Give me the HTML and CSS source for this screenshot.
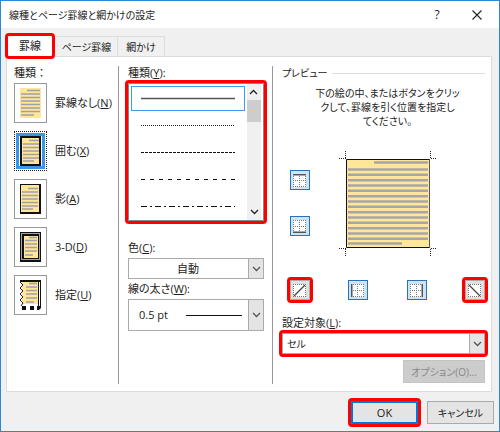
FILE: index.html
```
<!DOCTYPE html>
<html lang="ja">
<head>
  <meta charset="UTF-8">
  <meta name="viewport" content="width=device-width, initial-scale=1">
  <title>線種とページ罫線と網かけの設定</title>
  <link rel="stylesheet" href="styles.css">
</head>
<body>
  <!-- shared shapes -->
  <svg class="defs" width="0" height="0" aria-hidden="true">
    <symbol id="chevron" viewBox="0 0 9 6">
      <path d="M1 1l3.5 3.5L8 1" fill="none" stroke="currentColor" stroke-width="1.3"/>
    </symbol>
    <symbol id="page-lines" viewBox="0 0 16 23">
      <path d="M6 1.5h10M0 5h16M0 8.5h16M0 12h16M0 15.5h16M0 19h16M0 22h11" stroke="#a0a0a8" stroke-width="1.5"/>
    </symbol>
    <symbol id="cell-grid" viewBox="0 0 13 13">
      <path fill="#fff" d="M0 0h13v13H0z"/>
      <path d="M.5 0v13M6.5 0v13M12.5 0v13M0 .5h13M0 6.5h13M0 12.5h13" stroke="#777" stroke-dasharray="1 1"/>
    </symbol>
    <symbol id="cell-box" viewBox="0 0 13 13">
      <path fill="#fff" d="M0 0h13v13H0z"/>
      <path d="M.5 0v13M12.5 0v13M0 .5h13M0 12.5h13" stroke="#777" stroke-dasharray="1 1"/>
    </symbol>
  </svg>

  <div class="dialog">
    <header class="title-bar">
      <h1>線種とページ罫線と網かけの設定</h1>
      <button class="title-btn" aria-label="ヘルプ">?</button>
      <button class="title-btn" aria-label="閉じる">
        <svg width="10" height="10"><path d="M.5 .5l9 9M9.5 .5l-9 9" stroke="#222" stroke-width="1.1"/></svg>
      </button>
    </header>

    <nav class="tabs">
      <button class="tab active marked">罫線</button>
      <button class="tab wide">ページ罫線</button>
      <button class="tab">網かけ</button>
    </nav>

    <main class="panel">
      <section class="kinds">
        <h2 class="label">種類：</h2>
        <button class="kind">
          <span class="kind-icon">
            <svg width="23" height="32">
              <path fill="#ffe699" d="M1 1h21v30H1z"/>
              <path d="M8 3.5h13M2 7h19M2 10.5h19M2 14h19M2 17.5h19M2 21h19M2 24.5h19M2 28h13" stroke="#a0a0a8" stroke-width="1.5"/>
            </svg>
          </span>
          <span>罫線なし(<u>N</u>)</span>
        </button>
        <button class="kind selected">
          <span class="kind-icon">
            <svg width="23" height="32">
              <path fill="#ffe699" stroke="#111" stroke-width="2" d="M2 2h19v28H2z"/>
              <use href="#page-lines" x="4" y="4" width="16" height="23"/>
            </svg>
          </span>
          <span>囲む(<u>X</u>)</span>
        </button>
        <button class="kind">
          <span class="kind-icon">
            <svg width="23" height="32">
              <path fill="#111" d="M1 1h21v30H1z"/>
              <path fill="#ffe699" d="M2 2h18v27H2z"/>
              <use href="#page-lines" x="3" y="4" width="16" height="23"/>
            </svg>
          </span>
          <span>影(<u>A</u>)</span>
        </button>
        <button class="kind">
          <span class="kind-icon">
            <svg width="23" height="32">
              <path fill="#111" d="M1 1h21v30H1z"/>
              <path fill="#a6a6a6" d="M2 2h19v27H2z"/>
              <path fill="#111" d="M3 3h17v25H3z"/>
              <path fill="#ffe699" d="M5 5h14v22H5z"/>
              <path d="M10 6.5h8M6 9.5h12M6 13h12M6 16.5h12M6 20h12M6 24h8" stroke="#a0a0a8" stroke-width="1.5"/>
            </svg>
          </span>
          <span>3-D(<u>D</u>)</span>
        </button>
        <button class="kind">
          <span class="kind-icon">
            <svg width="23" height="32">
              <path fill="#ffe699" d="M3 3h16v22H3z"/>
              <path d="M1 2h21" stroke="#111" stroke-width="2"/>
              <path d="M19.5 3v24M21.5 3v25" stroke="#111"/>
              <path d="M1 3l3 3-3 3 3 3-3 3 3 3-3 3 3 3-2 3" fill="none" stroke="#222"/>
              <path d="M10 4.5h8M7 8h11M7 11.5h11M7 15h11M7 19h11M7 23h8" stroke="#a0a0a8" stroke-width="1.5"/>
              <path fill="#111" d="M3 27h4v4H3zM11 27h4v4h-4zM18 27h4v2l-2 2h-2z"/>
            </svg>
          </span>
          <span>指定(<u>U</u>)</span>
        </button>
      </section>

      <section class="line-style">
        <h2 class="label" id="style-label">種類(<u>Y</u>):</h2>
        <div class="list marked">
          <div class="list-rows" role="radiogroup" aria-labelledby="style-label">
            <label class="row"><input type="radio" name="style" aria-label="実線" checked><svg width="94" height="3"><path d="M0 1.5h94" stroke="#555" stroke-width="1.5"/></svg></label>
            <label class="row"><input type="radio" name="style" aria-label="点線"><svg width="94" height="3"><path d="M0 1.5h94" stroke="#222" stroke-dasharray="1 1"/></svg></label>
            <label class="row"><input type="radio" name="style" aria-label="破線"><svg width="94" height="3"><path d="M0 1.5h94" stroke="#111" stroke-dasharray="3 1"/></svg></label>
            <label class="row"><input type="radio" name="style" aria-label="破線 (広)"><svg width="94" height="3"><path d="M0 1.5h94" stroke="#111" stroke-dasharray="4 5"/></svg></label>
            <label class="row"><input type="radio" name="style" aria-label="一点鎖線"><svg width="94" height="3"><path d="M0 1.5h94" stroke="#111" stroke-dasharray="6 3 2 3"/></svg></label>
          </div>
          <div class="scrollbar">
            <button class="scroll-btn up" aria-label="上へ"><svg width="9" height="6"><use href="#chevron"/></svg></button>
            <div class="thumb"></div>
            <button class="scroll-btn" aria-label="下へ"><svg width="9" height="6"><use href="#chevron"/></svg></button>
          </div>
        </div>

        <label class="label color-label" for="color">色(<u>C</u>):</label>
        <div class="dropdown">
          <select id="color" class="centered"><option>自動</option></select>
          <span class="arrow"><svg width="9" height="6"><use href="#chevron"/></svg></span>
        </div>
        <label class="label" for="weight">線の太さ(<u>W</u>):</label>
        <div class="dropdown tall">
          <select id="weight"><option>0.5 pt</option></select>
          <svg class="weight-line" width="56" height="3"><path d="M0 1.5h56" stroke="#111"/></svg>
          <span class="arrow"><svg width="9" height="6"><use href="#chevron"/></svg></span>
        </div>
      </section>

      <section class="preview">
        <h2 class="label legend">プレビュー</h2>
        <div class="preview-body">
          <p>下の絵の中、またはボタンをクリッ<br>クして、罫線を引く位置を指定し<br>てください。</p>
          <div class="picture">
            <div class="side-btns">
              <button class="edge" aria-label="上罫線"><svg width="13" height="13"><use href="#cell-grid"/><path d="M0 .5h13" stroke="#555" stroke-width="2"/></svg></button>
              <button class="edge" aria-label="下罫線"><svg width="13" height="13"><use href="#cell-grid"/><path d="M0 12.5h13" stroke="#555" stroke-width="2"/></svg></button>
            </div>
            <svg width="98" height="105">
              <defs>
                <pattern id="text-lines" width="80" height="16" patternUnits="userSpaceOnUse" y="1">
                  <path d="M0 1.5h80M0 6.8h80M0 12.2h80" stroke="#a6a6a6" stroke-width="2.6"/>
                </pattern>
              </defs>
              <path fill="#ffe699" stroke="#111" d="M7.5 8.5h83v88h-83z"/>
              <path d="M90.5 9v88" stroke="#555"/>
              <path d="M35 11.5h54M9 92.5h54" stroke="#a6a6a6" stroke-width="2.6"/>
              <path fill="url(#text-lines)" d="M9 15h80v75H9z"/>
              <path d="M0 7.5h7M6.5 0v7M91.5 0v7M92 7.5h7M0 97.5h7M6.5 98v7M91.5 98v7M92 97.5h7" stroke="#222" stroke-dasharray="1 1"/>
            </svg>
          </div>
          <div class="bottom-btns">
            <button class="edge off marked" aria-label="斜め罫線 (右上がり)"><svg width="13" height="13"><use href="#cell-box"/><path d="M1 12L12 1" stroke="#444" stroke-width="1.2"/></svg></button>
            <button class="edge" aria-label="左罫線"><svg width="13" height="13"><use href="#cell-grid"/><path d="M.5 0v13" stroke="#555" stroke-width="2"/></svg></button>
            <button class="edge" aria-label="右罫線"><svg width="13" height="13"><use href="#cell-grid"/><path d="M12.5 0v13" stroke="#555" stroke-width="2"/></svg></button>
            <button class="edge off marked" aria-label="斜め罫線 (右下がり)"><svg width="13" height="13"><use href="#cell-box"/><path d="M1 1l11 11" stroke="#444" stroke-width="1.2"/></svg></button>
          </div>
        </div>
        <label class="label" for="target">設定対象(<u>L</u>):</label>
        <div class="dropdown marked">
          <select id="target"><option>セル</option></select>
          <span class="arrow"><svg width="9" height="6"><use href="#chevron"/></svg></span>
        </div>
        <button class="btn options" disabled>オプション(O)...</button>
      </section>
    </main>

    <footer class="actions">
      <button class="btn primary marked">OK</button>
      <button class="btn">キャンセル</button>
    </footer>
  </div>
</body>
</html>
```
FILE: styles.css
```
* {
  box-sizing: border-box;
  margin: 0;
  padding: 0;
}

body, button, select {
  font-family: "Open Sans", "Noto Sans CJK JP", sans-serif;
  font-size: 11px;
  line-height: 14px;
  font-feature-settings: "palt";
  color: #222;
}

button {
  border: none;
  background: none;
}

svg {
  display: block;
}

.defs {
  position: absolute;
}

.dialog {
  display: flex;
  flex-direction: column;
  min-height: 100vh;
  border: 1px solid #2b8ad8;
  background: #f0f0f0;
}

/* Red frames around the controls to use */
.marked {
  outline: 3px solid #f00;
  border-radius: 1px;
}

/* Title bar */
.title-bar {
  display: flex;
  align-items: center;
  height: 27px;
  padding: 0 8px 0 8px;
  background: #fff;
}

h1 {
  flex: 1;
  font-size: 10px;
  font-weight: normal;
}

.title-btn {
  display: flex;
  justify-content: center;
  align-items: center;
  width: 28px;
  height: 24px;
  margin-left: 12px;
  font-size: 12px;
}

/* Tabs */
.tabs {
  display: flex;
  align-items: flex-end;
  padding: 8px 7px 0;
}

.tab {
  width: 47px;
  height: 20px;
  border: 1px solid #dcdcdc;
  border-width: 1px 1px 0 0;
  font-size: 10px;
}

.tab.wide {
  width: 62px;
}

.tab.active {
  width: 44px;
  margin-right: 4px;
  border: none;
  background: #fff;
  font-size: 11px;
  z-index: 1;
}

/* Panel */
.panel {
  display: grid;
  grid-template-columns: 111px 154px 1fr;
  flex: 1;
  margin: 0 7px 0 5px;
  padding: 9px 6px 7px 0;
  border: 1px solid #dcdcdc;
  background: #fff;
}

.label {
  display: block;
  font-size: 11px;
  font-weight: normal;
  line-height: 14px;
  margin-bottom: 3px;
}

/* Left column */
.kinds {
  padding-left: 7px;
}

.kinds .label {
  font-feature-settings: normal;
}

.kind {
  display: flex;
  align-items: center;
  gap: 8px;
  margin-bottom: 8px;
}

.kind-icon {
  display: flex;
  justify-content: center;
  align-items: center;
  width: 33px;
  height: 40px;
  border: 1px solid #999;
}

.selected .kind-icon {
  border: 1px dotted #222;
  box-shadow: inset 0 0 0 1px #fff, inset 0 0 0 4px #3a96e8;
}

/* Middle column */
.line-style {
  padding: 0 8px 0 9px;
  border-left: 1px solid #999;
}

.list {
  display: flex;
  height: 138px;
  border: 1px solid #888;
}

.list-rows {
  flex: 1;
}

.row {
  display: flex;
  justify-content: center;
  align-items: center;
  height: 25px;
  margin: 2px;
  border: 1px solid transparent;
}

.row input {
  appearance: none;
}

.row:has(input:checked) {
  border-color: #3a9cf0;
}

.scrollbar {
  display: flex;
  flex-direction: column;
  width: 14px;
  margin-right: 2px;
  background: #f0f0f0;
}

.scroll-btn {
  display: flex;
  justify-content: center;
  align-items: center;
  height: 16px;
}

.up {
  transform: rotate(180deg);
}

.thumb {
  height: 22px;
  margin-bottom: auto;
  background: #cdcdcd;
}

.color-label {
  margin-top: 20px;
}

.dropdown {
  display: grid;
  grid-template-columns: 1fr 16px;
  align-items: center;
  height: 21px;
  margin-bottom: 3px;
  background: #fff;
}

.dropdown select {
  grid-area: 1 / 1 / 2 / 3;
  height: 100%;
  padding: 0 20px 0 4px;
  border: 1px solid #aaa;
  border-radius: 0;
  background: #fff;
  appearance: none;
}

.dropdown .centered {
  text-align: center;
  text-align-last: center;
}

.dropdown.marked select {
  font-size: 10px;
}

.dropdown.tall {
  height: 32px;
}

.tall select {
  padding-left: 10px;
}

.arrow {
  grid-area: 1 / 2;
  display: flex;
  justify-content: center;
  align-items: center;
  height: 100%;
  border: 1px solid #aaa;
  background: #e4e4e4;
  color: #555;
  pointer-events: none;
}

.weight-line {
  grid-area: 1 / 1;
  justify-self: end;
  margin-right: 6px;
  pointer-events: none;
}

/* Right column */
.preview {
  display: flex;
  flex-direction: column;
  padding-left: 9px;
  border-left: 1px solid #999;
}

.legend {
  display: flex;
  align-items: center;
  gap: 5px;
  font-size: 10px;
}

.legend::after {
  content: "";
  flex: 1;
  border-top: 1px solid #dcdcdc;
}

.preview-body {
  margin: 3px 0 16px;
  padding-left: 8px;
}

.preview-body p {
  font-size: 10px;
  text-align: center;
  white-space: nowrap;
}

.picture {
  display: flex;
  gap: 29px;
  margin: 23px 0 24px;
}

.side-btns {
  display: flex;
  flex-direction: column;
  gap: 26px;
  padding-top: 19px;
}

.bottom-btns {
  display: flex;
  justify-content: space-between;
}

.edge {
  width: 20px;
  height: 20px;
  padding: 2px;
  border: 1px solid #2a72b5;
  background: #cce4f7;
}

.edge.off {
  border-color: #aaa;
  background: #e0e0e0;
}

.btn {
  width: 67px;
  height: 23px;
  border: 1px solid #aaa;
  background: #e4e4e4;
  font-size: 10px;
}

.btn.options {
  align-self: flex-end;
  width: 82px;
  margin-top: 3px;
  border-color: #c4c4c4;
  background: #ccc;
  color: #888;
}

/* Footer */
.actions {
  display: flex;
  justify-content: flex-end;
  gap: 9px;
  padding: 9px 5px 7px;
}

.btn.primary {
  border: 2px solid #0078d7;
  font-size: 11px;
}
```
